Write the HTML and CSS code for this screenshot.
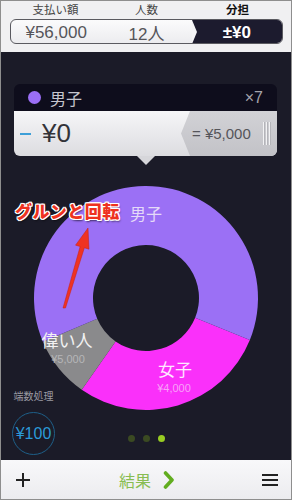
FILE: index.html
```html
<!DOCTYPE html>
<html lang="ja">
<head>
<meta charset="utf-8">
<title>割り勘</title>
<link rel="stylesheet" href="styles.css">
</head>
<body>
<div class="screen">
  <header class="top">
    <div class="labels">
      <span>支払い額</span>
      <span>人数</span>
      <span class="on">分担</span>
    </div>
    <div class="seg">
      <div class="seg-item">¥56,000</div>
      <div class="seg-item">12人</div>
      <div class="seg-item active">±¥0</div>
    </div>
  </header>

  <main class="stage">
    <section class="card">
      <div class="card-head">
        <span class="dot"></span>
        <span class="name">男子</span>
        <span class="count">×7</span>
      </div>
      <div class="card-body">
        <span class="minus"></span>
        <span class="amount">¥0</span>
        <div class="each">
          <span class="each-val">= ¥5,000</span>
          <span class="grip"><i></i><i></i><i></i></span>
        </div>
      </div>
    </section>

    <svg class="chart" width="290" height="256" viewBox="0 0 290 256">
      <path fill="#fa30fa" d="M 248.84 173.96 A 112 112 0 0 1 80.76 223.74 L 114.60 175.41 A 53 53 0 0 0 194.14 151.85 Z"/>
      <path fill="#8a8a8c" d="M 80.76 223.74 A 112 112 0 0 1 41.90 175.76 L 96.21 152.71 A 53 53 0 0 0 114.60 175.41 Z"/>
      <path fill="#9b70f5" d="M 41.90 175.76 A 112 112 0 1 1 248.84 173.96 L 194.14 151.85 A 53 53 0 1 0 96.21 152.71 Z"/>
      <text class="lbl lbl-m" x="145" y="54" text-anchor="middle">男子</text>
      <text class="lbl lbl-e" x="66" y="181" text-anchor="middle">偉い人</text>
      <text class="sub sub-e" x="67" y="197" text-anchor="middle">¥5,000</text>
      <text class="lbl lbl-f" x="174" y="210" text-anchor="middle">女子</text>
      <text class="sub sub-f" x="173" y="226" text-anchor="middle">¥4,000</text>
      <polygon class="arrow" points="62,142 64.5,142 83.36,81.79 87.96,83.17 87,62 74.54,79.15 79.14,80.53"/>
    </svg>

    <div class="dots">
      <span></span><span></span><span class="cur"></span>
    </div>

    <div class="note">グルンと回転</div>

    <div class="round">
      <span class="round-label">端数処理</span>
      <span class="round-btn">¥100</span>
    </div>
  </main>

  <footer class="bottom">
    <svg class="plus" width="16" height="16" viewBox="0 0 16 16"><path d="M8 1v14M1 8h14" stroke="#222" stroke-width="2"/></svg>
    <div class="result">
      <span>結果</span>
      <svg width="12" height="18" viewBox="0 0 12 18"><polyline points="2.5,2 9,9 2.5,16" fill="none" stroke="#62ad20" stroke-width="3.6" stroke-linecap="round" stroke-linejoin="round"/></svg>
    </div>
    <svg class="menu" width="16" height="14" viewBox="0 0 16 14"><path d="M0 2h16M0 7h16M0 12h16" stroke="#222" stroke-width="2"/></svg>
  </footer>
</div>
</body>
</html>
```

FILE: styles.css
```css
html, body {
  margin: 0;
  padding: 0;
  background: #ffffff;
}

.screen {
  width: 292px;
  height: 500px;
  box-sizing: border-box;
  border: 1px solid #8e8e8e;
  display: flex;
  flex-direction: column;
  font-family: "Liberation Sans", "Noto Sans CJK JP", sans-serif;
  overflow: hidden;
}

/* header */
.top {
  height: 51px;
  flex: none;
  background: #f0f0f2;
  display: flex;
  flex-direction: column;
}

.labels {
  display: grid;
  grid-template-columns: 1fr 1fr 1fr;
  margin: 0 8px 0 9px;
  height: 17px;
  line-height: 17px;
  font-family: "Noto Sans CJK JP", sans-serif;
  font-size: 11.5px;
  color: #444;
  text-align: center;
}

.labels .on {
  color: #111;
  font-weight: 700;
}

.seg {
  margin: 1px 8px 0 9px;
  height: 25px;
  box-sizing: border-box;
  border: 1px solid #5a5a60;
  border-radius: 6px;
  display: grid;
  grid-template-columns: 1fr 1fr 1fr;
  overflow: hidden;
  background: linear-gradient(#fbfbfc, #ececef);
}

.seg-item {
  display: flex;
  align-items: center;
  justify-content: center;
  font-family: "Liberation Sans", "Noto Sans CJK JP", sans-serif;
  font-size: 17px;
  color: #55555a;
  position: relative;
}

.seg-item.active {
  background: #1c1b2e;
  color: #ffffff;
  font-weight: 700;
}

.seg-item.active::before {
  content: "";
  position: absolute;
  left: 0;
  top: 0;
  width: 0;
  height: 0;
  border-top: 12px solid transparent;
  border-bottom: 12px solid transparent;
  border-left: 5px solid #f4f4f6;
}

/* main dark area */
.stage {
  flex: 1;
  background: #1b1b28;
  position: relative;
  display: flex;
  flex-direction: column;
}

.card {
  margin: 32px 14px 0 13px;
  position: relative;
}

.card::after {
  content: "";
  position: absolute;
  left: 123px;
  bottom: -9px;
  width: 0;
  height: 0;
  border-left: 9px solid transparent;
  border-right: 9px solid transparent;
  border-top: 9px solid #d6d6da;
}

.card-head {
  height: 27px;
  background: #0e0d1c;
  border-radius: 6px 6px 0 0;
  display: flex;
  align-items: center;
  padding: 0 14px 0 14px;
  font-family: "Noto Sans CJK JP", sans-serif;
}

.dot {
  width: 13px;
  height: 13px;
  border-radius: 50%;
  background: #9b6ff6;
  flex: none;
}

.name {
  margin-left: 9px;
  font-size: 16px;
  color: #c6c6ce;
  flex: 1;
}

.count {
  font-family: "Liberation Sans", sans-serif;
  font-size: 16px;
  color: #a4a4ac;
}

.card-body {
  height: 45px;
  background: linear-gradient(#f6f6f8, #dcdce0);
  border-radius: 0 0 6px 6px;
  display: flex;
  align-items: center;
  overflow: hidden;
}

.minus {
  width: 11px;
  height: 2px;
  background: #3d9fd8;
  margin-left: 6px;
  flex: none;
}

.amount {
  margin-left: 11px;
  font-size: 26px;
  color: #333338;
  flex: 1;
}

.each {
  align-self: stretch;
  width: 96px;
  background: linear-gradient(#d2d2d6, #c2c2c7);
  clip-path: polygon(9px 0, 100% 0, 100% 100%, 9px 100%, 0 50%);
  display: flex;
  align-items: center;
  padding-left: 11px;
  box-sizing: border-box;
}

.each-val {
  font-size: 15px;
  color: #55555a;
  flex: 1;
}

.grip {
  display: flex;
  gap: 2px;
  margin-right: 7px;
  height: 23px;
}

.grip i {
  width: 1px;
  background: #f2f2f4;
  box-shadow: 1px 0 0 #b4b4b9;
}

.chart {
  display: block;
  margin-top: 10px;
  flex: none;
}

.lbl {
  font-family: "Noto Sans CJK JP", sans-serif;
  font-size: 17px;
}

.lbl-m { fill: #e4d9f8; font-size: 16px; }
.lbl-e { fill: #f2f2f2; }
.lbl-f { fill: #ffe6ff; }

.sub {
  font-family: "Liberation Sans", sans-serif;
  font-size: 11px;
}

.sub-e { fill: #b6b6b8; }
.sub-f { fill: #f8a2f8; }

.arrow {
  fill: #ef3322;
  stroke: #c81e12;
  stroke-width: 0.5;
}

.dots {
  display: flex;
  justify-content: center;
  gap: 8px;
  margin-top: 13px;
}

.dots span {
  width: 7px;
  height: 7px;
  border-radius: 50%;
  background: #3b4a22;
}

.dots span.cur {
  background: #98cc22;
}

.note {
  position: absolute;
  left: 14px;
  top: 149px;
  font-family: "Noto Sans CJK JP", sans-serif;
  font-weight: 900;
  font-size: 17px;
  line-height: 20px;
  letter-spacing: 0.5px;
  color: #ee3220;
  text-shadow:
    1px 0 0 #fff, -1px 0 0 #fff, 0 1px 0 #fff, 0 -1px 0 #fff,
    1px 1px 0 #fff, -1px -1px 0 #fff, 1px -1px 0 #fff, -1px 1px 0 #fff,
    1px 2px 2px rgba(0, 0, 0, 0.6);
}

.round {
  position: absolute;
  left: 11px;
  top: 338px;
  display: flex;
  flex-direction: column;
  align-items: center;
  gap: 10px;
}

.round-label {
  font-family: "Noto Sans CJK JP", sans-serif;
  font-size: 10px;
  line-height: 12px;
  color: #9a9aa2;
}

.round-btn {
  width: 43px;
  height: 43px;
  box-sizing: border-box;
  border: 1px solid #1e5f88;
  border-radius: 50%;
  display: flex;
  align-items: center;
  justify-content: center;
  font-size: 16px;
  color: #2b9ad8;
}

/* footer */
.bottom {
  height: 39px;
  flex: none;
  background: linear-gradient(#f8f8fa, #ececef);
  display: flex;
  align-items: center;
  justify-content: space-between;
  padding: 0 13px 0 14px;
}

.result {
  display: flex;
  align-items: center;
  gap: 12px;
  margin-left: 88px;
  margin-right: auto;
  font-family: "Noto Sans CJK JP", sans-serif;
  font-size: 16px;
  color: #88bd52;
}

.plus, .menu {
  flex: none;
}
```
